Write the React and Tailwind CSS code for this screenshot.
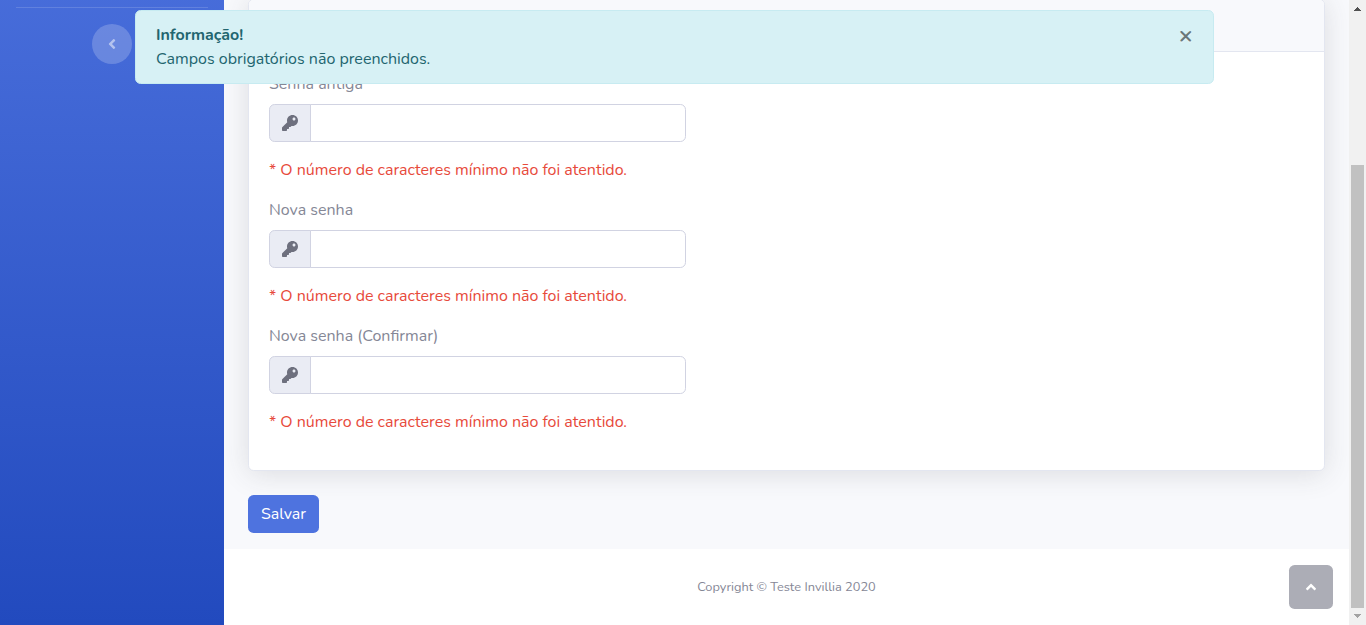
import { FaAngleLeft, FaAngleUp, FaKey } from "react-icons/fa";

const ERROR = "* O número de caracteres mínimo não foi atentido.";

function PasswordField({ id, label }) {
  return (
    <div className="h-[126px]">
      <label htmlFor={id} className="mb-2 block h-6 leading-6">
        {label}
      </label>
      <div className="flex h-[38px] w-[417px]">
        <span className="flex w-[42px] items-center justify-center rounded-l-[5.6px] border border-[#d1d3e2] bg-[#eaecf4] text-[#6e707e]">
          <FaKey size={16} />
        </span>
        <input
          id={id}
          type="password"
          className="-ml-px min-w-0 flex-1 rounded-r-[5.6px] border border-[#d1d3e2] bg-white px-3 outline-none"
        />
      </div>
      <p className="mt-4 h-6 leading-6 text-[#e74a3b]">{ERROR}</p>
    </div>
  );
}

function Sidebar() {
  return (
    <aside className="flex w-56 shrink-0 flex-col items-center bg-[linear-gradient(180deg,#4e73df_-20.1%,#224abe_100%)]">
      <hr className="mt-[7px] h-px w-48 border-0 bg-white/15" />
      <button className="mt-4 flex size-10 items-center justify-center rounded-full bg-white/20 pr-[0.8px] text-white/50">
        <FaAngleLeft size={16} />
      </button>
    </aside>
  );
}

function Alert() {
  return (
    <div className="absolute top-[10px] left-[135px] z-20 flex h-[74px] w-[1079px] items-start justify-between rounded-[5.6px] border border-[#c7ebf1] bg-[#d7f1f5] px-5 pt-3 leading-6 text-[#22656f]">
      <div>
        <strong className="block font-bold">Informação!</strong>
        <p>Campos obrigatórios não preenchidos.</p>
      </div>
      <button
        aria-label="Fechar"
        className="text-2xl leading-none font-bold text-black opacity-50 [text-shadow:0_1px_0_#fff]"
      >
        ×
      </button>
    </div>
  );
}

function Scrollbar() {
  return (
    <div className="z-10 flex w-[17px] shrink-0 flex-col items-center bg-[#f1f1f1]">
      <svg viewBox="0 0 17 17" className="size-[17px]" fill="#505050" shapeRendering="crispEdges">
        <path d="M8 7h1v1h1v1h1v1h1v1H5v-1h1V9h1V8h1z" />
      </svg>
      <div className="mt-[148px] h-[443px] w-[13px] bg-[#c1c1c1]" />
      <svg viewBox="0 0 17 17" className="size-[17px]" fill="#a3a3a3" shapeRendering="crispEdges">
        <path d="M5 6h7v1h-1v1h-1v1H9v1H8V9H7V8H6V7H5z" />
      </svg>
    </div>
  );
}

export default function App() {
  return (
    <div className="relative flex h-[625px] w-[1366px] overflow-hidden bg-[#f8f9fc] font-['Nunito','Lato',sans-serif] text-base text-[#858796]">
      <Sidebar />
      <div className="flex min-w-0 flex-1 flex-col">
        <main className="h-[549px] px-6">
          <section className="-mt-px h-[472px] w-[1077px] rounded-[5.6px] border border-[#e3e6f0] bg-white shadow-[0_2.4px_28px_0_rgba(58,59,69,0.15)]">
            <header className="h-[52px] rounded-t-[4.6px] border-b border-[#e3e6f0] bg-[#f8f9fc]" />
            <form className="px-5 pt-5">
              <PasswordField id="old" label="Senha antiga" />
              <PasswordField id="new" label="Nova senha" />
              <PasswordField id="confirm" label="Nova senha (Confirmar)" />
            </form>
          </section>
          <button className="mt-6 h-[38px] w-[71px] rounded-[5.6px] bg-[#4e73df] text-center text-white">
            Salvar
          </button>
        </main>
        <footer className="flex flex-1 items-center justify-center bg-white text-[12.8px] leading-none">
          Copyright © Teste Invillia 2020
        </footer>
      </div>
      <Scrollbar />
      <Alert />
      <button aria-label="Topo" className="absolute top-[565px] left-[1289px] z-10 flex size-11 items-center justify-center rounded-[5.6px] bg-[#acadb6] text-white">
        <FaAngleUp size={16} />
      </button>
    </div>
  );
}
